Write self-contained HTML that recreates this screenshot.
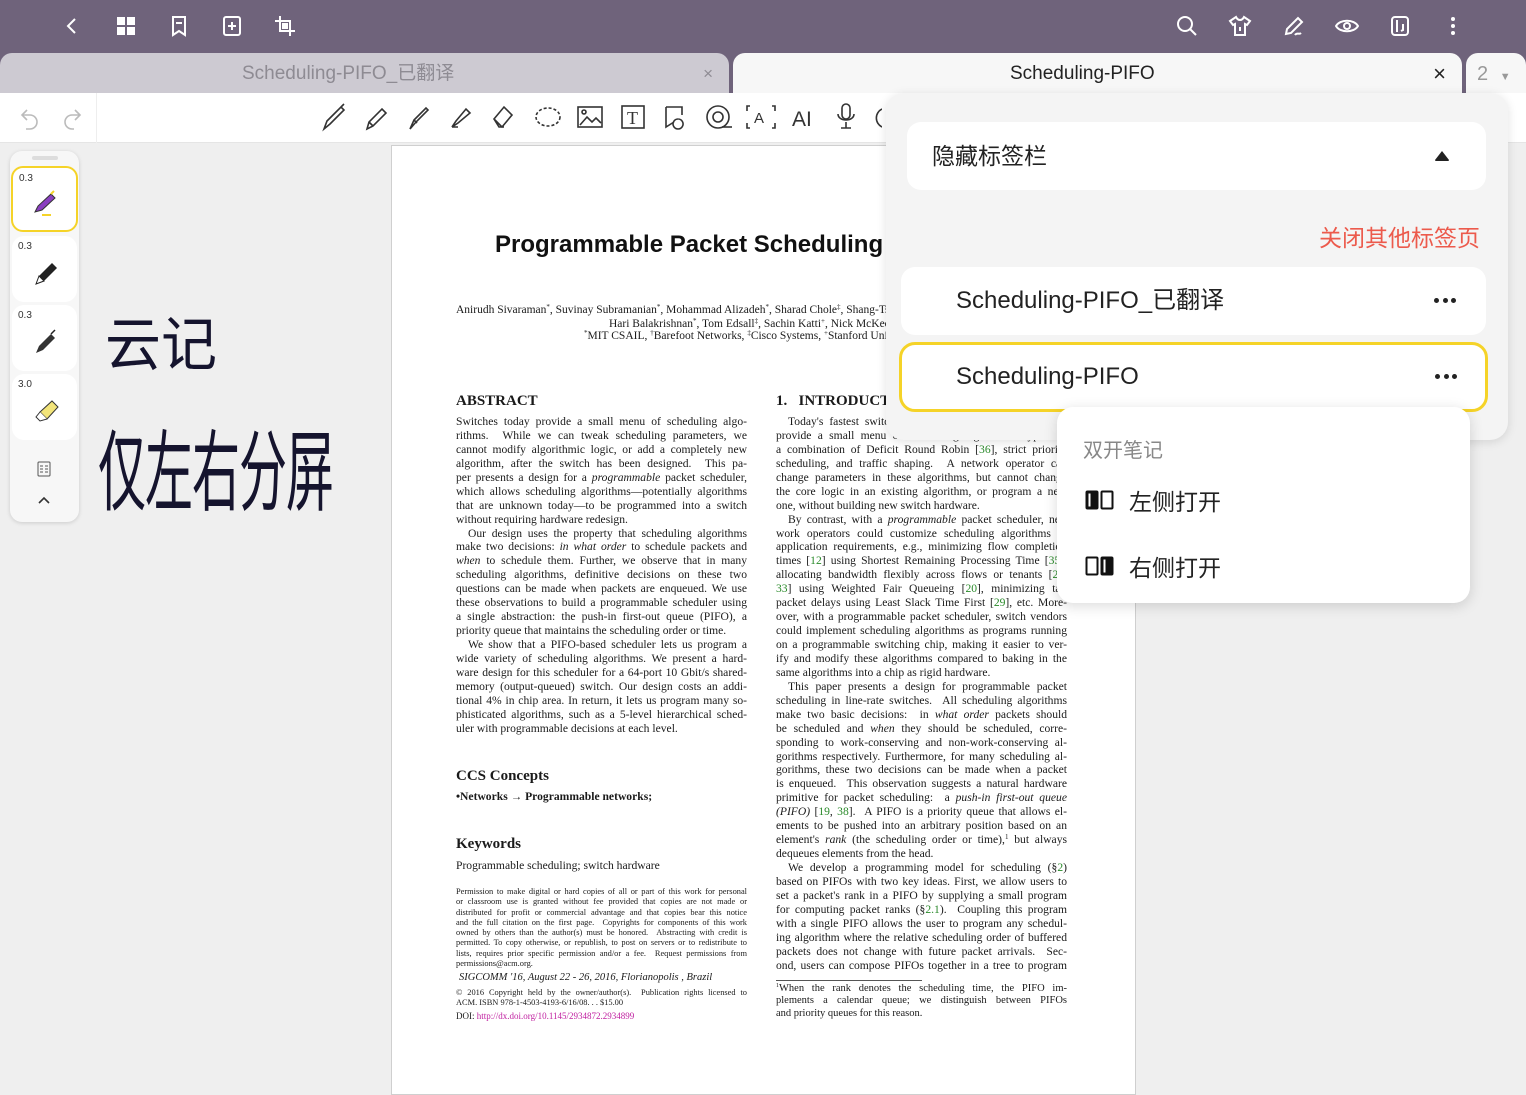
<!DOCTYPE html>
<html><head><meta charset="utf-8"><style>
*{margin:0;padding:0;box-sizing:border-box}
sup{line-height:0;vertical-align:4px;font-size:7px}
body{width:1526px;height:1080px;overflow:hidden;background:#efefef;font-family:"Liberation Sans","Noto Sans CJK SC",sans-serif;position:relative}
.abs{position:absolute}
.top{left:0;top:0;width:1526px;height:53px;background:#6f637b}
.ic{position:absolute;top:14px;width:24px;height:24px}
.tabrow{left:0;top:53px;width:1526px;height:40px;background:#6f637b}
.tb{position:absolute;top:53px;height:42px;border-radius:12px 12px 0 0}
.toolbar{left:0;top:93px;width:1526px;height:50px;background:#fff;border-bottom:1px solid #e5e5e5}
.paper{left:391px;top:145px;width:745px;height:950px;background:#fff;border:1px solid #cfcfcf}
.s{font-family:"Liberation Serif",serif;color:#1a1a1a}
.col{position:absolute;width:291px;font-family:"Liberation Serif",serif;font-size:11.6px;line-height:13.95px;color:#1a1a1a}
.col div{text-align:justify;text-align-last:justify;height:13.95px;white-space:nowrap;overflow:hidden}
.col div.e{text-align-last:left}
.col div.i{padding-left:12px}
.g{color:#2a8a2a}
.side{left:10px;top:151px;width:69px;height:371px;background:#f7f7f7;border-radius:12px;box-shadow:0 1px 4px rgba(0,0,0,.15)}
.pen{position:absolute;left:2px;width:65px;height:66px;background:#fff;border-radius:12px;font-size:10px;color:#333}
.pen span{position:absolute;left:6px;top:5px}
.pop{left:886px;top:93px;width:622px;height:347px;background:#f4f4f4;border-radius:18px;box-shadow:0 2px 10px rgba(0,0,0,.12)}
.item{position:absolute;background:#fff;border-radius:14px}
.sub{left:1057px;top:407px;width:413px;height:196px;background:#fff;border-radius:16px;box-shadow:0 3px 14px rgba(0,0,0,.15)}
.dots{position:absolute;right:30px;top:50%;margin-top:-3px;width:22px;height:6px;display:flex;justify-content:space-between}
.dots i{width:5px;height:5px;border-radius:50%;background:#222}
.hw{font-family:'WenQuanYi Zen Hei','Noto Sans CJK SC',sans-serif;color:#15142e}
</style></head><body>
<div class="abs top"></div>
<div class="abs tabrow"></div>
<svg class="ic" style="left:60px" viewBox="0 0 24 24"><path d="M15 5l-7 7 7 7" fill="none" stroke="#fff" stroke-width="2"/></svg>
<svg class="ic" style="left:114px" viewBox="0 0 24 24"><rect x="3" y="3" width="8" height="8" fill="#fff"/><rect x="13" y="3" width="8" height="8" fill="#fff"/><rect x="3" y="13" width="8" height="8" fill="#fff"/><rect x="13" y="13" width="8" height="8" fill="#fff"/></svg>
<svg class="ic" style="left:167px" viewBox="0 0 24 24"><path d="M6 3h12v18l-6-4-6 4z M9 9h6" fill="none" stroke="#fff" stroke-width="2"/></svg>
<svg class="ic" style="left:220px" viewBox="0 0 24 24"><rect x="4" y="3" width="16" height="18" rx="2" fill="none" stroke="#fff" stroke-width="2"/><path d="M12 8v8M8 12h8" stroke="#fff" stroke-width="2"/></svg>
<svg class="ic" style="left:273px" viewBox="0 0 24 24"><path d="M7 2v15h15M2 7h15v15" fill="none" stroke="#fff" stroke-width="2"/><rect x="9" y="9" width="6" height="6" fill="#fff"/></svg>
<svg class="ic" style="left:1175px" viewBox="0 0 24 24"><circle cx="10" cy="10" r="7" fill="none" stroke="#fff" stroke-width="2"/><path d="M15 15l6 6" stroke="#fff" stroke-width="2"/></svg>
<svg class="ic" style="left:1228px" viewBox="0 0 24 24"><path d="M8 3l-6 4 3 4 2-1v11h10V10l2 1 3-4-6-4c-1 2-2 3-4 3s-3-1-4-3zM12 13v4" fill="none" stroke="#fff" stroke-width="2"/></svg>
<svg class="ic" style="left:1282px" viewBox="0 0 24 24"><path d="M4 20l1-5L16 4l4 4L9 19zM13 21c2-3 4 0 6-2" fill="none" stroke="#fff" stroke-width="2"/></svg>
<svg class="ic" style="left:1335px" viewBox="0 0 24 24"><path d="M1 12c4-7 18-7 22 0-4 7-18 7-22 0z" fill="none" stroke="#fff" stroke-width="2"/><circle cx="12" cy="12" r="3" fill="none" stroke="#fff" stroke-width="2"/></svg>
<svg class="ic" style="left:1388px" viewBox="0 0 24 24"><rect x="4" y="3" width="16" height="18" rx="3" fill="none" stroke="#fff" stroke-width="2"/><path d="M9 6v12M15 10v6l-2 1" fill="none" stroke="#fff" stroke-width="2"/></svg>
<svg class="ic" style="left:1441px" viewBox="0 0 24 24"><circle cx="12" cy="5" r="2" fill="#fff"/><circle cx="12" cy="12" r="2" fill="#fff"/><circle cx="12" cy="19" r="2" fill="#fff"/></svg>
<div class="tb" style="left:0;width:729px;background:#cdcad2;line-height:42px;font-size:19px;color:#8e8b93"><span style="position:absolute;left:242px">Scheduling-PIFO_已翻译</span><span style="position:absolute;right:16px;font-size:17px">×</span></div>
<div class="tb" style="left:733px;width:729px;background:#f7f7f7;line-height:42px;font-size:19px;color:#222"><span style="position:absolute;left:277px">Scheduling-PIFO</span><span style="position:absolute;right:16px;font-size:22px">×</span></div>
<div class="tb" style="left:1466px;width:60px;background:#f7f7f7;line-height:42px;font-size:20px;color:#999;padding-left:11px">2 <span style="font-size:11px;margin-left:6px">▼</span></div>
<div class="abs toolbar"></div>
<div class="abs" style="left:0;top:93px;width:97px;height:50px;border-right:1px solid #eee"></div>
<svg class="abs" style="left:18px;top:106px" width="66" height="24" viewBox="0 0 66 24" fill="none" stroke="#bbb" stroke-width="1.6"><path d="M9 4L4 9l5 5M4 9h8a7 7 0 0 1 0 14H8"/><path d="M57 4l5 5-5 5M62 9h-8a7 7 0 0 0 0 14h2"/></svg>
<div class="abs" style="left:322px;top:101px">
<svg width="560" height="32" viewBox="0 0 560 32" fill="none" stroke="#333" stroke-width="1.6">
<path d="M2 28l3-8 14-14 3 3-14 14zM19 6l3-3"/>
<path d="M45 28l2-7 13-13 4 4-13 13zM47 21l4 4"/>
<path d="M88 28l4-9 12-12 2 2-12 12zM92 19l3 3"/>
<path d="M130 26l4-6 10-12 4 4-12 10zM130 26h6"/>
<path d="M172 18l10-12 8 8-10 12zM172 18l5 8h5"/>
<ellipse cx="226" cy="16" rx="12" ry="9" stroke-dasharray="3 2"/>
<rect x="256" y="6" width="24" height="20"/><path d="M258 24l7-8 5 5 4-4 5 5"/><circle cx="262" cy="11" r="2"/>
<rect x="300" y="5" width="22" height="22"/><text x="305" y="23" font-family="Liberation Serif" font-size="18" fill="#333" stroke="none">T</text>
<path d="M344 6h16v8M344 6v20l8-5M356 18a5 5 0 1 0 .1 0"/>
<circle cx="396" cy="16" r="11"/><circle cx="396" cy="16" r="5"/><path d="M400 26l10 0"/>
<path d="M428 5h-3v5M425 22v5h3M450 5h3v5M453 22v5h-3"/><text x="432" y="22" font-family="Liberation Sans" font-size="15" fill="#333" stroke="none">A</text>
<text x="470" y="25" font-family="Liberation Sans" font-size="21" fill="#333" stroke="none">AI</text>
<rect x="520" y="3" width="8" height="15" rx="4"/><path d="M516 13c0 8 16 8 16 0M524 21v6M519 27h10"/>
<path d="M560 8a10 10 0 0 0 0 18"/>
</svg></div>
<div class="abs paper"></div>
<div class="abs s" style="left:495px;top:231px;font-family:'Liberation Sans',sans-serif;font-weight:bold;font-size:24px;color:#111;white-space:nowrap">Programmable Packet Scheduling at Line Rate</div>
<div class="abs s" style="left:456px;top:304px;font-size:11.5px;line-height:13.5px;white-space:nowrap">Anirudh Sivaraman<sup>*</sup>, Suvinay Subramanian<sup>*</sup>, Mohammad Alizadeh<sup>*</sup>, Sharad Chole<sup>‡</sup>, Shang-Tse Chuang<sup>‡</sup>, Anurag Agrawal<sup>†</sup></div>
<div class="abs s" style="left:609px;top:318px;font-size:11.5px;white-space:nowrap">Hari Balakrishnan<sup>*</sup>, Tom Edsall<sup>‡</sup>, Sachin Katti<sup>+</sup>, Nick McKeown<sup>+</sup></div>
<div class="abs s" style="left:584px;top:330px;font-size:11.5px;white-space:nowrap"><sup>*</sup>MIT CSAIL, <sup>†</sup>Barefoot Networks, <sup>‡</sup>Cisco Systems, <sup>+</sup>Stanford University</div>
<div class="abs s" style="left:456px;top:393px;font-weight:bold;font-size:15px">ABSTRACT</div>
<div class="abs s" style="left:776px;top:393px;font-weight:bold;font-size:15px">1.&nbsp;&nbsp;&nbsp;INTRODUCTION</div>
<div class="col" style="left:456px;top:415px">
<div>Switches today provide a small menu of scheduling algo-</div>
<div>rithms. &nbsp;While we can tweak scheduling parameters, we</div>
<div>cannot modify algorithmic logic, or add a completely new</div>
<div>algorithm, after the switch has been designed. &nbsp;This pa-</div>
<div>per presents a design for a <i>programmable</i> packet scheduler,</div>
<div>which allows scheduling algorithms—potentially algorithms</div>
<div>that are unknown today—to be programmed into a switch</div>
<div class="e">without requiring hardware redesign.</div>
<div class="i">Our design uses the property that scheduling algorithms</div>
<div>make two decisions: <i>in what order</i> to schedule packets and</div>
<div><i>when</i> to schedule them. Further, we observe that in many</div>
<div>scheduling algorithms, definitive decisions on these two</div>
<div>questions can be made when packets are enqueued. We use</div>
<div>these observations to build a programmable scheduler using</div>
<div>a single abstraction: the push-in first-out queue (PIFO), a</div>
<div class="e">priority queue that maintains the scheduling order or time.</div>
<div class="i">We show that a PIFO-based scheduler lets us program a</div>
<div>wide variety of scheduling algorithms. We present a hard-</div>
<div>ware design for this scheduler for a 64-port 10 Gbit/s shared-</div>
<div>memory (output-queued) switch. Our design costs an addi-</div>
<div>tional 4% in chip area. In return, it lets us program many so-</div>
<div>phisticated algorithms, such as a 5-level hierarchical sched-</div>
<div class="e">uler with programmable decisions at each level.</div>
</div>
<div class="abs s" style="left:456px;top:768px;font-weight:bold;font-size:15px">CCS Concepts</div>
<div class="abs s" style="left:456px;top:790px;font-weight:bold;font-size:11.6px">•Networks → Programmable networks;</div>
<div class="abs s" style="left:456px;top:836px;font-weight:bold;font-size:15px">Keywords</div>
<div class="abs s" style="left:456px;top:859px;font-size:11.6px">Programmable scheduling; switch hardware</div>
<div class="col" style="left:456px;top:887px;font-size:8.4px;line-height:10.3px">
<div style="height:10.3px">Permission to make digital or hard copies of all or part of this work for personal</div>
<div style="height:10.3px">or classroom use is granted without fee provided that copies are not made or</div>
<div style="height:10.3px">distributed for profit or commercial advantage and that copies bear this notice</div>
<div style="height:10.3px">and the full citation on the first page. &nbsp;Copyrights for components of this work</div>
<div style="height:10.3px">owned by others than the author(s) must be honored. &nbsp;Abstracting with credit is</div>
<div style="height:10.3px">permitted. To copy otherwise, or republish, to post on servers or to redistribute to</div>
<div style="height:10.3px">lists, requires prior specific permission and/or a fee. &nbsp;Request permissions from</div>
<div class="e" style="height:10.3px">permissions@acm.org.</div>
</div>
<div class="abs s" style="left:459px;top:972px;font-size:10.5px;font-style:italic">SIGCOMM '16, August 22 - 26, 2016, Florianopolis , Brazil</div>
<div class="col" style="left:456px;top:988px;font-size:8.4px;line-height:10.3px">
<div style="height:10.3px">© 2016 Copyright held by the owner/author(s). &nbsp;Publication rights licensed to</div>
<div class="e" style="height:10.3px">ACM. ISBN 978-1-4503-4193-6/16/08. . . $15.00</div>
</div>
<div class="abs s" style="left:456px;top:1011px;font-size:9px">DOI: <span style="color:#c020a0">http://dx.doi.org/10.1145/2934872.2934899</span></div>
<div class="col" style="left:776px;top:415px">
<div class="i">Today's fastest switches, such as the Broadcom Trident,</div>
<div>provide a small menu of scheduling algorithms: typically,</div>
<div>a combination of Deficit Round Robin [<span class="g">36</span>], strict priority</div>
<div>scheduling, and traffic shaping. &nbsp;A network operator can</div>
<div>change parameters in these algorithms, but cannot change</div>
<div>the core logic in an existing algorithm, or program a new</div>
<div class="e">one, without building new switch hardware.</div>
<div class="i">By contrast, with a <i>programmable</i> packet scheduler, net-</div>
<div>work operators could customize scheduling algorithms to</div>
<div>application requirements, e.g., minimizing flow completion</div>
<div>times [<span class="g">12</span>] using Shortest Remaining Processing Time [<span class="g">35</span>],</div>
<div>allocating bandwidth flexibly across flows or tenants [<span class="g">26</span>,</div>
<div><span class="g">33</span>] using Weighted Fair Queueing [<span class="g">20</span>], minimizing tail</div>
<div>packet delays using Least Slack Time First [<span class="g">29</span>], etc. More-</div>
<div>over, with a programmable packet scheduler, switch vendors</div>
<div>could implement scheduling algorithms as programs running</div>
<div>on a programmable switching chip, making it easier to ver-</div>
<div>ify and modify these algorithms compared to baking in the</div>
<div class="e">same algorithms into a chip as rigid hardware.</div>
<div class="i">This paper presents a design for programmable packet</div>
<div>scheduling in line-rate switches. &nbsp;All scheduling algorithms</div>
<div>make two basic decisions: &nbsp;in <i>what order</i> packets should</div>
<div>be scheduled and <i>when</i> they should be scheduled, corre-</div>
<div>sponding to work-conserving and non-work-conserving al-</div>
<div>gorithms respectively. Furthermore, for many scheduling al-</div>
<div>gorithms, these two decisions can be made when a packet</div>
<div>is enqueued. &nbsp;This observation suggests a natural hardware</div>
<div>primitive for packet scheduling: &nbsp;a <i>push-in first-out queue</i></div>
<div><i>(PIFO)</i> [<span class="g">19</span>, <span class="g">38</span>]. &nbsp;A PIFO is a priority queue that allows el-</div>
<div>ements to be pushed into an arbitrary position based on an</div>
<div>element's <i>rank</i> (the scheduling order or time),<sup>1</sup> but always</div>
<div class="e">dequeues elements from the head.</div>
<div class="i">We develop a programming model for scheduling (§<span class="g">2</span>)</div>
<div>based on PIFOs with two key ideas. First, we allow users to</div>
<div>set a packet's rank in a PIFO by supplying a small program</div>
<div>for computing packet ranks (§<span class="g">2.1</span>). &nbsp;Coupling this program</div>
<div>with a single PIFO allows the user to program any schedul-</div>
<div>ing algorithm where the relative scheduling order of buffered</div>
<div>packets does not change with future packet arrivals. &nbsp;Sec-</div>
<div>ond, users can compose PIFOs together in a tree to program</div>
</div>
<div class="abs" style="left:776px;top:980px;width:146px;border-top:1px solid #555"></div>
<div class="col" style="left:776px;top:983px;font-size:10.5px;line-height:12.3px">
<div style="height:12.3px"><sup style="font-size:6px">1</sup>When the rank denotes the scheduling time, the PIFO im-</div>
<div style="height:12.3px">plements a calendar queue; we distinguish between PIFOs</div>
<div class="e" style="height:12.3px">and priority queues for this reason.</div>
</div>
<div class="abs side">
<div style="position:absolute;left:22px;top:5px;width:26px;height:4px;border-radius:2px;background:#ddd"></div>
<div class="pen" style="top:15px;border:2px solid #f5d328;left:1px;width:67px"><span>0.3</span>
<svg style="position:absolute;left:20px;top:22px" width="26" height="28" viewBox="0 0 26 28"><path d="M2 22l3-6 13-12 4 4-13 12z" fill="#8a3fc0" stroke="#333" stroke-width="1"/><path d="M18 4l3-3M9 25h9" stroke="#f5d328" stroke-width="2"/></svg></div>
<div class="pen" style="top:85px"><span>0.3</span>
<svg style="position:absolute;left:22px;top:24px" width="26" height="26" viewBox="0 0 26 26"><path d="M2 24l3-8 13-13 5 5-13 13z" fill="#222"/><path d="M2 24l3-8 5 5z" fill="#fff" stroke="#222"/></svg></div>
<div class="pen" style="top:154px"><span>0.3</span>
<svg style="position:absolute;left:22px;top:24px" width="26" height="26" viewBox="0 0 26 26"><path d="M2 24l3-7 12-12 4 4-12 12z" fill="#333"/><path d="M17 5l4-4" stroke="#222" stroke-width="1.5"/></svg></div>
<div class="pen" style="top:223px"><span>3.0</span>
<svg style="position:absolute;left:22px;top:24px" width="26" height="26" viewBox="0 0 26 26"><path d="M6 14l12-11 6 6-11 12z" fill="#f2e47a" stroke="#333"/><path d="M6 14l-4 5 4 4 7-2" fill="#fff" stroke="#333"/></svg></div>
<svg style="position:absolute;left:27px;top:310px" width="14" height="16" viewBox="0 0 14 16"><rect x="1" y="1" width="12" height="14" rx="1" fill="none" stroke="#555"/><path d="M3 5h3M8 5h3M3 8h3M8 8h3M3 11h3M8 11h3" stroke="#555"/></svg>
<svg style="position:absolute;left:28px;top:345px" width="12" height="8" viewBox="0 0 12 8"><path d="M1 7l5-5 5 5" fill="none" stroke="#333" stroke-width="1.6"/></svg>
</div>
<div class="abs hw" style="left:105px;top:298px;font-size:56px;transform:scaleY(1.05);transform-origin:top left">云记</div>
<div class="abs hw" style="left:98px;top:400px;font-size:48px;transform:scaleY(1.85);transform-origin:top left;letter-spacing:-1px">仅左右分屏</div>
<div class="abs pop">
<div class="item" style="left:21px;top:29px;width:579px;height:68px;line-height:68px;padding-left:25px;font-size:23px;color:#222">隐藏标签栏
<svg style="position:absolute;right:36px;top:28px" width="16" height="12" viewBox="0 0 16 12"><path d="M8 1L15 10Q15 11 14 11H2Q1 11 1 10z" fill="#222"/></svg></div>
<div style="position:absolute;right:28px;top:126px;font-size:23px;color:#ec5a4c">关闭其他标签页</div>
<div class="item" style="left:15px;top:174px;width:585px;height:68px;line-height:68px;padding-left:55px;font-size:24px;color:#222">Scheduling-PIFO_已翻译<span class="dots"><i></i><i></i><i></i></span></div>
<div class="item" style="left:13px;top:249px;width:589px;height:70px;line-height:64px;padding-left:54px;font-size:24px;color:#222;border:3px solid #f5d328;border-radius:16px">Scheduling-PIFO<span class="dots" style="right:28px"><i></i><i></i><i></i></span></div>
</div>
<div class="abs sub">
<div style="position:absolute;left:26px;top:27px;font-size:20px;color:#888">双开笔记</div>
<svg style="position:absolute;left:28px;top:83px" width="30" height="20" viewBox="0 0 30 20"><rect x="1.5" y="1.5" width="11" height="17" rx="1" fill="#111" stroke="#111" stroke-width="2"/><rect x="16.5" y="1.5" width="11" height="17" rx="1" fill="none" stroke="#111" stroke-width="2"/><rect x="3.5" y="3.5" width="2" height="13" fill="#fff"/></svg>
<div style="position:absolute;left:72px;top:76px;font-size:23px;color:#222">左侧打开</div>
<svg style="position:absolute;left:28px;top:149px" width="30" height="20" viewBox="0 0 30 20"><rect x="1.5" y="1.5" width="11" height="17" rx="1" fill="none" stroke="#111" stroke-width="2"/><rect x="16.5" y="1.5" width="11" height="17" rx="1" fill="#111" stroke="#111" stroke-width="2"/><rect x="18.5" y="3.5" width="2" height="13" fill="#fff"/></svg>
<div style="position:absolute;left:72px;top:142px;font-size:23px;color:#222">右侧打开</div>
</div>
</body></html>
